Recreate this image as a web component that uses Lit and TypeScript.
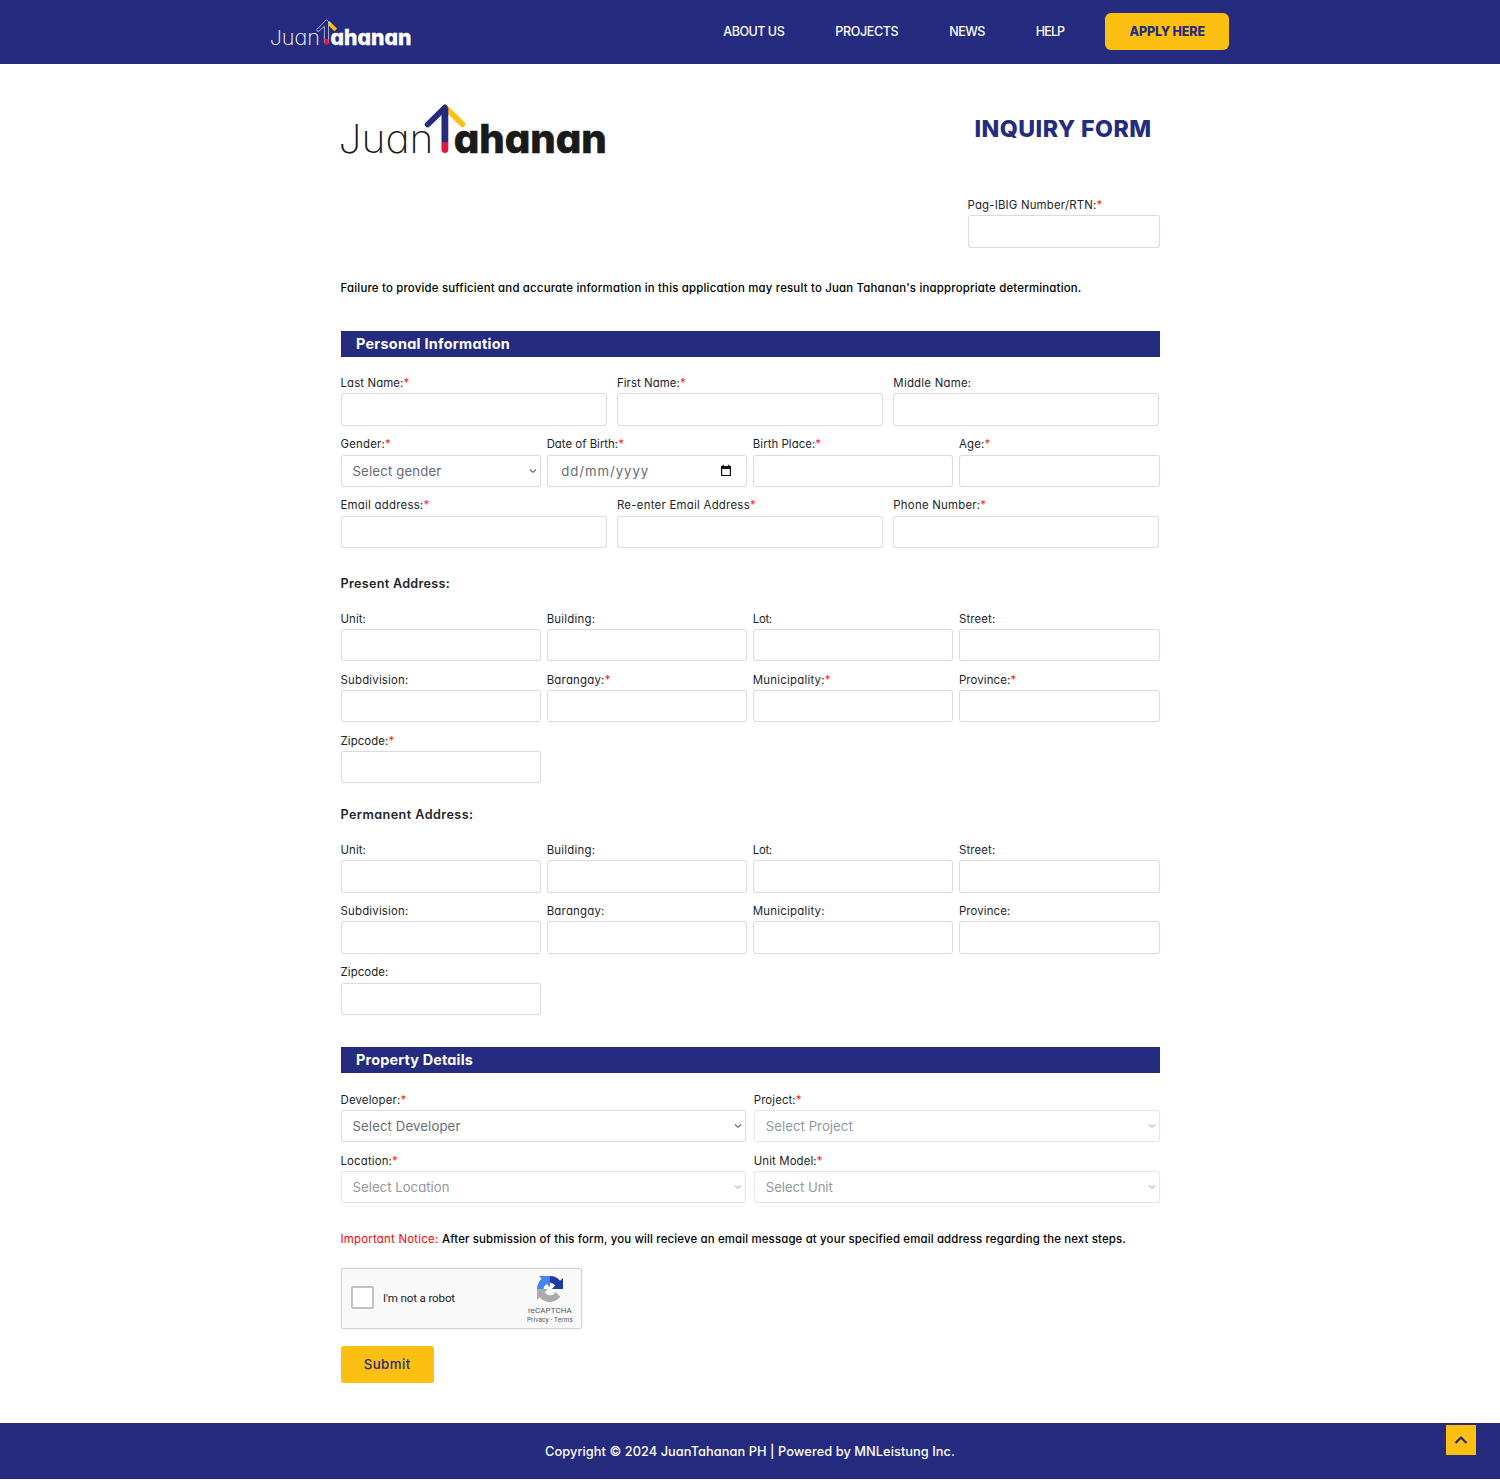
import { LitElement, html, svg, css, nothing } from "lit";
import { customElement, property, query } from "lit/decorators.js";

interface Field {
  label: string;
  width: number;
  required?: boolean;
  kind?: "select" | "date";
  value?: string;
  valueWidth?: number;
  disabled?: boolean;
}

/** A run of text tracked so that it fills a given width. */
@customElement("text-run")
export class TextRun extends LitElement {
  static styles = css`
    :host { display: inline-block; white-space: pre; }
    .run { display: inline-block; white-space: pre; }
  `;
  @property() text = "";
  @property({ type: Number }) width = 0;
  @query(".run") run!: HTMLSpanElement;

  updated() {
    this.run.style.letterSpacing = "0px";
    const natural = this.run.getBoundingClientRect().width;
    this.run.style.letterSpacing = `${(this.width - natural) / this.text.length}px`;
  }

  render() {
    return html`<span class="run">${this.text}</span>`;
  }
}

const run = (text: string, width: number) => html`<text-run .text=${text} .width=${width}></text-run>`;

@customElement("brand-logo")
export class BrandLogo extends LitElement {
  static styles = css`
    :host { display: block; }
    svg { display: block; width: 100%; height: auto; overflow: visible; }
    text { font-family: Inter, "Open Sans", sans-serif; font-feature-settings: "cv11" 1; fill: #1a1a1a; }
    .thin { font-weight: 200; font-size: 39px; }
    .bold { font-weight: 800; font-size: 40px; stroke: #1a1a1a; stroke-width: 0.600px; }
    .inverse text { fill: #fff; }
    .inverse .bold { stroke: #fff; }
    .inverse .thin { font-weight: 250; }
  `;
  @property({ type: Boolean }) inverse = false;

  render() {
    const arrow = this.inverse
      ? svg`
        <path d="M108 6.500 L122.500 20.500" fill="none" stroke="#fdbf11" stroke-width="7" stroke-linecap="butt"></path>
        <path d="M101 45 V14 L91 23 Q87 25 86.5 20 L104.700 1.500 L109 5 V45 Z" fill="#252b7e" stroke="#fff" stroke-opacity="0.800" stroke-width="1.500" stroke-linejoin="round"></path>
        <path d="M101 38 h8 v7 a4 4 0 0 1 -8 0 Z" fill="#e4173e"></path>`
      : svg`
        <path d="M103.900 3 L121.500 20.300" fill="none" stroke="#fdbf11" stroke-width="5.600" stroke-linecap="round"></path>
        <path d="M86.700 20.500 L103.900 3.600 V38" fill="none" stroke="#252b7e" stroke-width="5.800" stroke-linecap="round" stroke-linejoin="round"></path>
        <path d="M100.500 4 h6.800 V38.500 h-6.800 Z" fill="#252b7e"></path>
        <path d="M100.500 38.300 h6.800 v7.300 a3.400 3.400 0 0 1 -6.800 0 Z" fill="#e4173e"></path>`;
    return html`
      <svg class=${this.inverse ? "inverse" : ""} viewBox="0 0 265 50">
        <text class="thin" x="-2.500" y="49" textLength="95" lengthAdjust="spacingAndGlyphs">Juan</text>
        <text class="bold" x="112.800" y="49" textLength="153" lengthAdjust="spacingAndGlyphs">ahanan</text>
        ${arrow}
      </svg>
    `;
  }
}

@customElement("form-field")
export class FormField extends LitElement {
  static styles = css`
    :host { display: block; min-width: 0; }
    .label { display: flex; height: 20.200px; line-height: 20.200px; font-size: 11.400px; font-weight: 430; color: #212529; white-space: nowrap; }
    .star { color: #ff1a1a; }
    .control {
      box-sizing: border-box; height: 32.400px; border: 1px solid #d9dcdf; border-radius: 3px;
      background: #fff; display: flex; align-items: center; justify-content: space-between;
      padding: 0 3px 0 11px; font-size: 13.200px; color: #646c74;
      box-shadow: 0 0 1px rgba(0, 0, 0, 0.08);
    }
    .date { padding: 0 14.500px 0 13.500px; }
    .disabled { opacity: 0.7; }
    .disabled svg { opacity: 0.600; }
    svg { display: block; flex: none; }
  `;
  @property({ attribute: false }) field!: Field;

  render() {
    const f = this.field;
    const icon =
      f.kind === "select"
        ? html`<svg width="8" height="6" viewBox="0 0 8 6"><path d="M1 1.500 L4 4.300 L7 1.500" fill="none" stroke="#555c63" stroke-width="1.100"></path></svg>`
        : f.kind === "date"
          ? html`<svg width="12" height="13" viewBox="0 0 12 13"><path d="M1.600 2.500 h8.800 v9 h-8.800 Z" fill="none" stroke="#111" stroke-width="1.200"></path><path d="M1 2 h10 v3 h-10 Z M2.500 0.800 h1.400 v2 h-1.400 Z M8.100 0.800 h1.400 v2 h-1.400 Z" fill="#111"></path></svg>`
          : nothing;
    return html`
      <div class="label">${run(f.label, f.width)}${f.required ? html`<span class="star">*</span>` : nothing}</div>
      <div class="control ${f.kind ?? ""} ${f.disabled ? "disabled" : ""}">
        ${f.value ? run(f.value, f.valueWidth ?? 80) : nothing}${icon}
      </div>
    `;
  }
}

const names: Field[] = [
  { label: "Last Name:", width: 63, required: true },
  { label: "First Name:", width: 63, required: true },
  { label: "Middle Name:", width: 78 },
];
const birth: Field[] = [
  { label: "Gender:", width: 44.5, required: true, kind: "select", value: "Select gender", valueWidth: 89 },
  { label: "Date of Birth:", width: 71.5, required: true, kind: "date", value: "dd/mm/yyyy", valueWidth: 88 },
  { label: "Birth Place:", width: 62.5, required: true },
  { label: "Age:", width: 25.5, required: true },
];
const contact: Field[] = [
  { label: "Email address:", width: 83, required: true },
  { label: "Re-enter Email Address", width: 133, required: true },
  { label: "Phone Number:", width: 87, required: true },
];
const address = (required: boolean): Field[] => [
  { label: "Unit:", width: 25.5 },
  { label: "Building:", width: 48.5 },
  { label: "Lot:", width: 19 },
  { label: "Street:", width: 36.5 },
  { label: "Subdivision:", width: 68 },
  { label: "Barangay:", width: 58, required },
  { label: "Municipality:", width: 72, required },
  { label: "Province:", width: 51.5, required },
  { label: "Zipcode:", width: 48, required },
];
const propertyFields: Field[] = [
  { label: "Developer:", width: 60, required: true, kind: "select", value: "Select Developer", valueWidth: 108 },
  { label: "Project:", width: 42, required: true, kind: "select", value: "Select Project", valueWidth: 87, disabled: true },
  { label: "Location:", width: 51.5, required: true, kind: "select", value: "Select Location", valueWidth: 97, disabled: true },
  { label: "Unit Model:", width: 63, required: true, kind: "select", value: "Select Unit", valueWidth: 67, disabled: true },
];

@customElement("app-root")
export class AppRoot extends LitElement {
  static styles = css`
    :host {
      display: flex; flex-direction: column; box-sizing: border-box; height: 1480px; padding-bottom: 1px;
      background: #fff; color: #000; font-family: Inter, "Open Sans", sans-serif; font-feature-settings: "cv11" 1;
    }
    .header { height: 64px; background: #252b7e; flex: none; display: flex; justify-content: center; }
    .bar { width: 958.500px; display: flex; align-items: center; }
    .bar-logo { width: 140px; margin-right: auto; padding-top: 1px; }
    .nav { display: flex; align-items: center; gap: 51px; font-size: 12.500px; font-weight: 500; color: #fff; padding-bottom: 1px; }
    .apply {
      box-sizing: border-box; width: 124px; height: 37px; margin-left: -10px; border-radius: 6px; background: #fdbf11;
      color: #252b7e; font-weight: 800; display: flex; align-items: center; justify-content: center;
    }
    .form { width: 819px; margin: 0 auto; flex: 1; padding-top: 40px; display: flex; flex-direction: column; }
    .top { display: flex; justify-content: space-between; height: 91px; }
    .logo { width: 265px; }
    .title { margin: 0; padding: 9px 8px 0 0; font-size: 23.200px; line-height: 32px; font-weight: 850; color: #252b7e; }
    .rtn { width: 192px; margin-left: auto; }
    .warn { margin: 30.200px 0 0; height: 20px; line-height: 20px; font-size: 11.400px; font-weight: 480; }
    .section {
      margin: 32.800px 0 0; padding-left: 15.500px; height: 26.400px; line-height: 26.400px; background: #252b7e;
      color: #fff; font-size: 14.400px; font-weight: 650;
    }
    .details { margin-top: 31.900px; }
    .grid { display: grid; row-gap: 8.500px; }
    .three { grid-template-columns: repeat(3, minmax(0, 1fr)); column-gap: 10.300px; }
    .four { grid-template-columns: repeat(4, minmax(0, 1fr)); column-gap: 5.600px; }
    .two { grid-template-columns: repeat(2, minmax(0, 1fr)); column-gap: 7.500px; }
    .rows { display: flex; flex-direction: column; gap: 8.500px; margin-top: 16.300px; }
    .sub { margin: 25.600px 0 15px; height: 20px; line-height: 20px; font-size: 12.600px; font-weight: 600; color: #212529; }
    .sub.second { margin-top: 21.900px; }
    .notice { display: flex; gap: 3.500px; margin: 26px 0 18.700px; height: 20px; line-height: 20px; font-size: 11.400px; font-weight: 480; }
    .alert { color: #f00; font-weight: 430; }
    .captcha {
      box-sizing: border-box; width: 241.400px; height: 61px; background: #f9f9f9; border: 1px solid #d3d3d3; border-radius: 2px;
      box-shadow: 0 0 3px rgba(0, 0, 0, 0.1); display: flex; align-items: center; padding: 0 8px 0 9.500px; color: #222;
      font-family: Roboto, sans-serif; font-size: 11.600px;
    }
    .check { box-sizing: border-box; width: 23px; height: 23px; border: 2px solid #c1c1c1; border-radius: 2px; background: #fff; margin: 0 9px 2px 0; }
    .brand { margin-left: auto; display: flex; flex-direction: column; align-items: center; color: #555; padding-top: 4px; }
    .brand svg { display: block; margin-bottom: 2.500px; }
    .brand-name { font-size: 8px; line-height: 11px; }
    .brand-links { font-size: 6.400px; line-height: 9px; }
    .submit {
      margin-top: 17px; width: 93.400px; height: 37px; border-radius: 2.500px; background: #fdbf11; color: #252b7e;
      display: flex; align-items: center; justify-content: center; font-size: 13.200px; font-weight: 500;
    }
    .footer {
      position: relative; height: 56px; flex: none; background: #252b7e; color: #fff; display: flex; align-items: center;
      justify-content: center; font-size: 12.800px; font-weight: 450;
    }
    .totop { position: absolute; right: 24px; top: 2px; width: 30px; height: 30px; background: #fdbf11; display: flex; align-items: center; justify-content: center; }
  `;

  private fields(list: Field[], columns: string) {
    return html`<div class="grid ${columns}">${list.map((f) => html`<form-field .field=${f}></form-field>`)}</div>`;
  }

  render() {
    return html`
      <header class="header">
        <div class="bar">
          <brand-logo class="bar-logo" inverse></brand-logo>
          <nav class="nav">
            ${run("ABOUT US", 61)}${run("PROJECTS", 63)}${run("NEWS", 35.5)}${run("HELP", 28.5)}
            <div class="apply">${run("APPLY HERE", 75.5)}</div>
          </nav>
        </div>
      </header>
      <main class="form">
        <div class="top">
          <brand-logo class="logo"></brand-logo>
          <h1 class="title">${run("INQUIRY FORM", 177)}</h1>
        </div>
        <form-field class="rtn" .field=${{ label: "Pag-IBIG Number/RTN:", width: 129, required: true }}></form-field>
        <p class="warn">${run("Failure to provide sufficient and accurate information in this application may result to Juan Tahanan's inappropriate determination.", 741)}</p>
        <h2 class="section">${run("Personal Information", 154)}</h2>
        <div class="rows">
          ${this.fields(names, "three")}${this.fields(birth, "four")}${this.fields(contact, "three")}
        </div>
        <h3 class="sub">${run("Present Address:", 109.5)}</h3>
        ${this.fields(address(true), "four")}
        <h3 class="sub second">${run("Permanent Address:", 133)}</h3>
        ${this.fields(address(false), "four")}
        <h2 class="section details">${run("Property Details", 117)}</h2>
        <div class="rows">${this.fields(propertyFields, "two")}</div>
        <p class="notice">
          <span class="alert">${run("Important Notice:", 98)}</span>
          <span>${run("After submission of this form, you will recieve an email message at your specified email address regarding the next steps.", 684)}</span>
        </p>
        <div class="captcha">
          <div class="check"></div>
          ${run("I'm not a robot", 72)}
          <div class="brand">
            <svg width="26" height="26" viewBox="0 0 64 64">
              <path fill="#1c3aa9" d="M64 31.955l-.033-1.37V4.687l-7.16 7.16C50.948 4.674 42.033.093 32.05.093c-10.4 0-19.622 4.96-25.458 12.64l11.736 11.86a15.55 15.55 0 0 1 4.754-5.334c2.05-1.6 4.952-2.906 8.968-2.906.485 0 .86.057 1.135.163 4.976.393 9.288 3.14 11.828 7.124l-8.307 8.307L64 31.953"></path>
              <path fill="#4285f4" d="M31.862.094l-1.37.033H4.594l7.16 7.16C4.58 13.147 0 22.06 0 32.046c0 10.4 4.96 19.622 12.64 25.458L24.5 45.768a15.55 15.55 0 0 1-5.334-4.754c-1.6-2.05-2.906-4.952-2.906-8.968 0-.485.057-.86.163-1.135.393-4.976 3.14-9.288 7.124-11.828l8.307 8.307L31.86.095"></path>
              <path fill="#ababab" d="M.001 32.045l.033 1.37v25.898l7.16-7.16c5.86 7.173 14.774 11.754 24.76 11.754 10.4 0 19.622-4.96 25.458-12.64l-11.736-11.86a15.55 15.55 0 0 1-4.754 5.334c-2.05 1.6-4.952 2.906-8.968 2.906-.485 0-.86-.057-1.135-.163-4.976-.393-9.288-3.14-11.828-7.124l8.307-8.307c-10.522.04-22.4.066-27.295-.005"></path>
            </svg>
            <span class="brand-name">${run("reCAPTCHA", 44)}</span>
            <span class="brand-links">${run("Privacy - Terms", 46)}</span>
          </div>
        </div>
        <div class="submit">${run("Submit", 47)}</div>
      </main>
      <footer class="footer">
        ${run("Copyright © 2024 JuanTahanan PH | Powered by MNLeistung Inc.", 410)}
        <div class="totop">
          <svg width="16" height="10" viewBox="0 0 16 10"><path d="M2.500 8 L8 2.500 L13.500 8" fill="none" stroke="#252b7e" stroke-width="2.200"></path></svg>
        </div>
      </footer>
    `;
  }
}
